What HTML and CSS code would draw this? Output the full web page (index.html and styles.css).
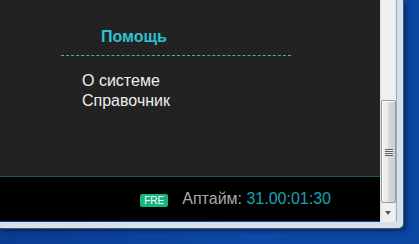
FILE: index.html
```html
<!DOCTYPE html>
<html lang="ru">
<head>
  <meta charset="UTF-8" />
  <title>Помощь</title>
  <link rel="stylesheet" href="styles.css">
</head>
<body>
  <div class="window">
    <div class="page">
      <!-- меню помощи -->
      <div class="content">
        <div class="menu">
          <div class="menu-title">Помощь</div>
          <ul class="menu-list">
            <li>О системе</li>
            <li>Справочник</li>
          </ul>
        </div>
      </div>

      <!-- статус -->
      <div class="footer">
        <span class="badge">FRE</span>
        <span class="uptime">Аптайм: <span class="uptime-value">31.00:01:30</span></span>
      </div>
    </div>

    <div class="scrollbar">
      <div class="track">
        <div class="thumb"><div class="grip"></div></div>
      </div>
      <div class="arrow-down"></div>
    </div>
  </div>
</body>
</html>
```

FILE: styles.css
```css
body {
  margin: 0;
  height: 244px;
  overflow: hidden;
  background: linear-gradient(90deg, #0a3c92 0, #0c49a8 60%, #0b46a3 100%);
  font-family: "Liberation Sans", Arial, sans-serif;
}

.window {
  display: flex;
  width: 397px;
  height: 222px;
  border-right: 6px solid #d6e0ea;
  border-bottom: 6px solid #d6e0ea;
  border-bottom-right-radius: 5px;
  box-shadow: 1px 1px 0 #4a5a70, 3px 3px 5px rgba(0, 0, 0, 0.45);
}

.page {
  display: flex;
  flex-direction: column;
  width: 380px;
}

.content {
  height: 176px;
  background: #222;
}

.menu {
  width: 230px;
  margin-left: 61px;
  padding-top: 27px;
}

.menu-title {
  padding-left: 40px;
  padding-bottom: 8px;
  border-bottom: 1px dashed #2fb8c8;
  color: #2fc1d3;
  font-size: 16px;
  font-weight: bold;
  line-height: 20px;
}

.menu-list {
  list-style: none;
  margin: 15px 0 0;
  padding-left: 21px;
  color: #eee;
  font-size: 16px;
  line-height: 20px;
}

.footer {
  display: flex;
  align-items: baseline;
  justify-content: flex-end;
  gap: 14px;
  height: 45px;
  padding: 12px 49px 0 0;
  box-sizing: border-box;
  border-top: 1px solid #0d5862;
  background: #000;
}

.badge {
  width: 28px;
  height: 13px;
  border-radius: 2px;
  background: #17b47f;
  color: #fff;
  font-size: 10px;
  line-height: 13px;
  text-align: center;
}

.uptime {
  color: #a9a9a9;
  font-size: 16px;
  line-height: 20px;
}

.uptime-value {
  color: #1aa2b4;
}

/* полоса прокрутки */
.scrollbar {
  display: flex;
  flex-direction: column;
  width: 16px;
  border-right: 1px solid #a3abb5;
  background: linear-gradient(90deg, #dcdcdc 0, #efefef 2px, #f0f0f0 14px, #e4e4e4 16px);
}

.track {
  flex: 1;
  padding-top: 100px;
}

.thumb {
  display: flex;
  align-items: center;
  justify-content: center;
  width: 15px;
  height: 103px;
  margin-left: 1px;
  box-sizing: border-box;
  border: 1px solid #979797;
  border-radius: 2px;
  background: linear-gradient(90deg, #f4f4f4 0, #e8e8e8 45%, #d6d6d6 55%, #cfcfcf 100%);
  box-shadow: inset 1px 1px 0 #fff;
}

.grip {
  width: 8px;
  height: 7px;
  margin-top: 1px;
  background: repeating-linear-gradient(180deg, #5a5a5a 0, #5a5a5a 1px, #f2f2f2 1px, #f2f2f2 2px);
}

.arrow-down {
  position: relative;
  height: 17px;
}

.arrow-down::after {
  content: "";
  position: absolute;
  left: 5px;
  top: 6px;
  border-left: 3.5px solid transparent;
  border-right: 3.5px solid transparent;
  border-top: 4px solid #555;
}
```
